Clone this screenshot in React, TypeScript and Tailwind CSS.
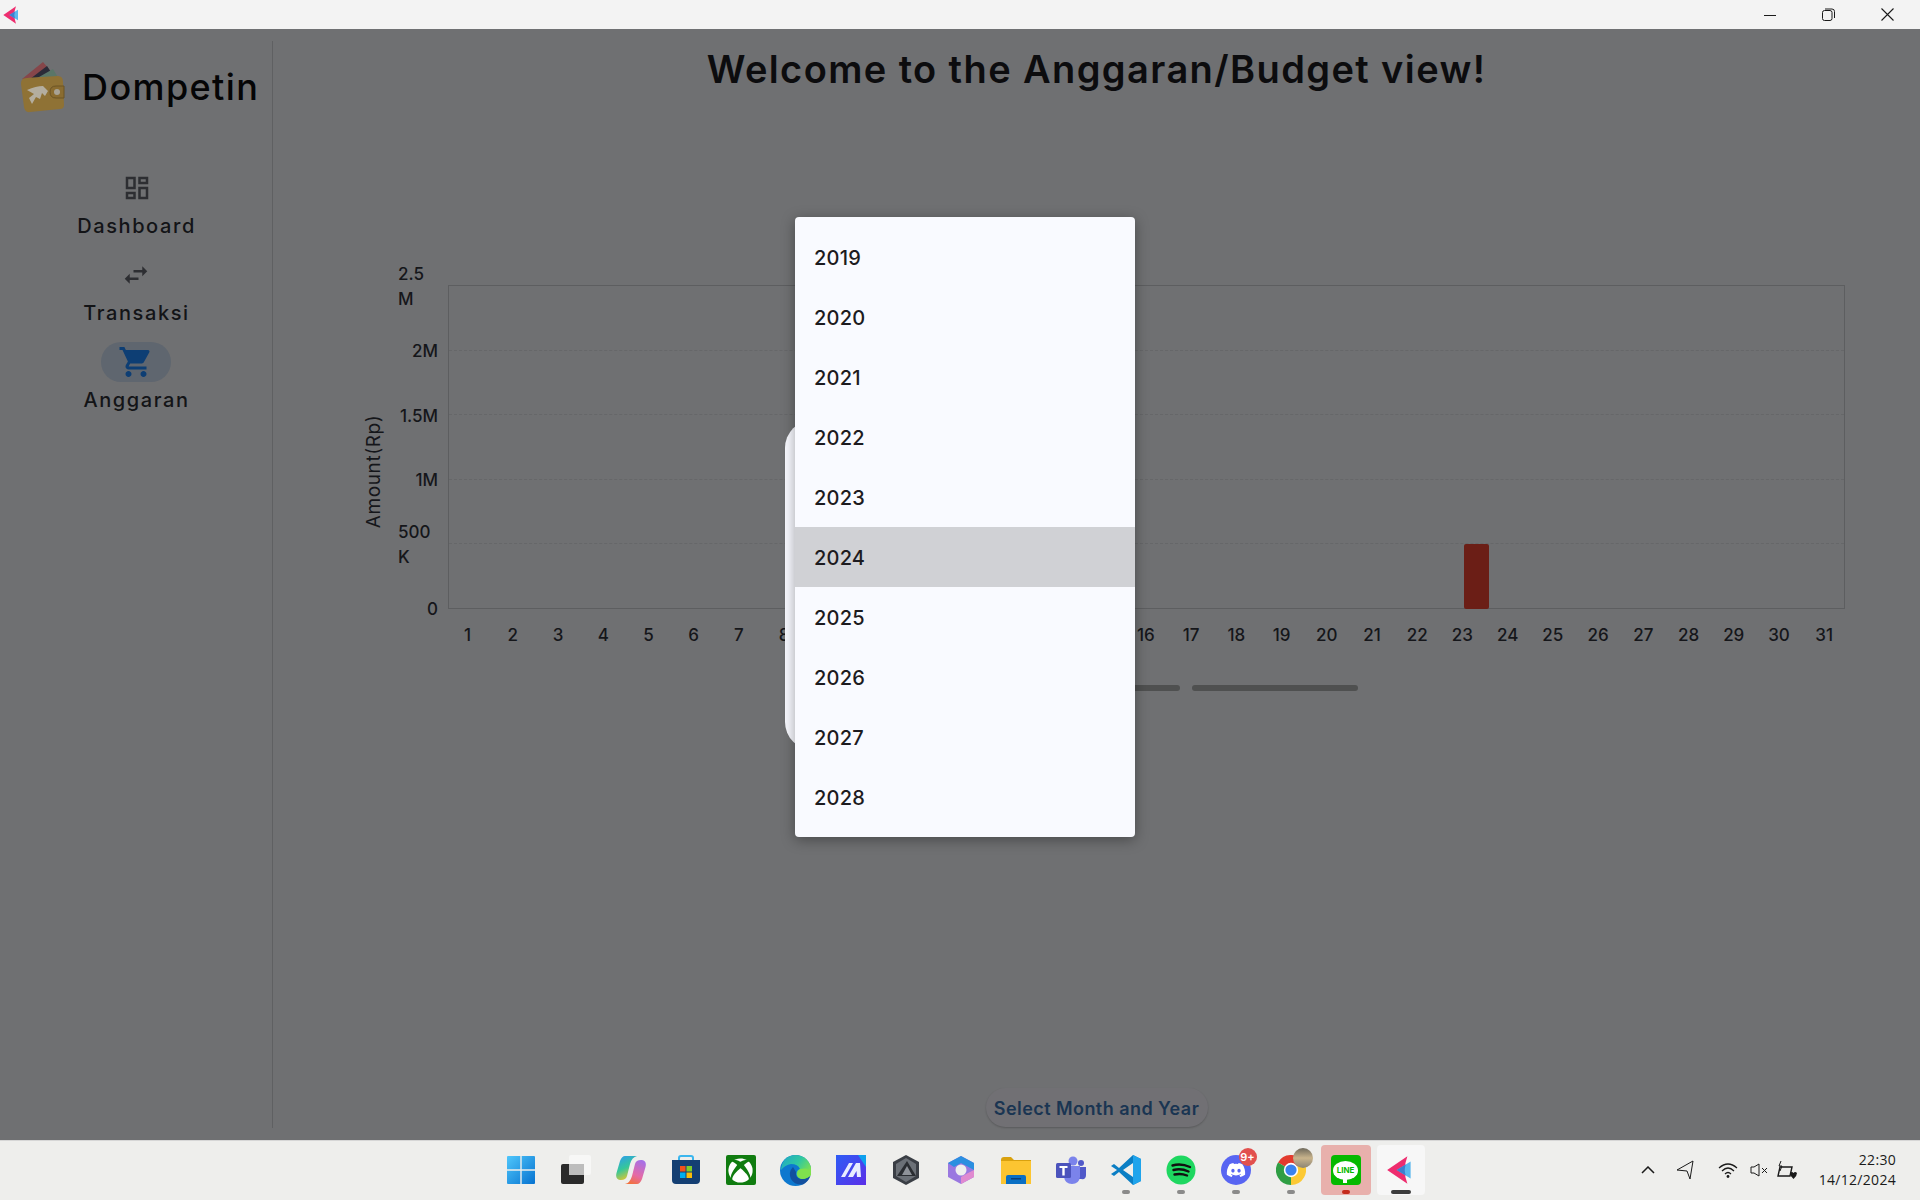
import React from "react";
import { MdOutlineDashboard, MdSwapHoriz, MdShoppingCart } from "react-icons/md";
import { FaDiscord, FaXbox } from "react-icons/fa";

const font = { fontFamily: '"Inter", "Noto Sans", sans-serif' };

const Kite = ({ s = 30 }: { s?: number }) => (
  <svg width={s} height={s} viewBox="0 0 30 30">
    <path d="M2 15 L21 2 Q16 15 21 28 Z" fill="#ee2d6f" />
    <path d="M11 15 L24 7 L24 23 Z" fill="#5bb8ee" />
    <path d="M11 15 L19.5 9.8 Q17.5 15 19.5 20.2 Z" fill="#3d7fd0" />
  </svg>
);

const Wallet = () => (
  <svg width="46" height="52" viewBox="0 0 46 52">
    <path d="M2 17 L23 0 L29 7 L10 20 Z" fill="#86464a" />
    <path d="M10 17 L27 4 L31 10 L16 20 Z" fill="#2b2b38" />
    <path d="M12 19 L33 7 L39 17 Z" fill="#5a7668" />
    <path d="M3 17 Q2 16 21 15 L38 14 Q43 14 43 20 L44 43 Q44 47 40 47 L10 50 Q5 51 4 45 L1 22 Q1 18 3 17 Z" fill="#8f7235" />
    <path d="M30 30 Q30 24 36 24 L44 24 L44 36 L36 36 Q30 36 30 30 Z" fill="#8a6c30" stroke="#6c5424" strokeWidth="1" />
    <circle cx="37" cy="30" r="3" fill="#a8a294" />
    <path d="M7 28 Q16 24 23 24 L28 29 L25 34 L22 31 L20 37 L16 35 L12 42 L9 36 L14 32 Z" fill="#b4ae9f" />
  </svg>
);

const Win = () => (
  <svg width="30" height="30" viewBox="0 0 30 30">
    <defs>
      <linearGradient id="wg" x1="0" y1="0" x2="1" y2="1">
        <stop offset="0" stopColor="#4fc6fb" />
        <stop offset="1" stopColor="#0672d0" />
      </linearGradient>
    </defs>
    <path d="M1 2 Q1 1 2 1 H14.3 V14.3 H1 Z M15.7 1 H28 Q29 1 29 2 V14.3 H15.7 Z M1 15.7 H14.3 V29 H2 Q1 29 1 28 Z M15.7 15.7 H29 V28 Q29 29 28 29 H15.7 Z" fill="url(#wg)" />
  </svg>
);
const TaskView = () => (
  <svg width="30" height="30" viewBox="0 0 30 30">
    <rect x="0" y="9" width="23" height="20" rx="2" fill="#2a2a2a" />
    <rect x="8" y="0" width="22" height="20" rx="2" fill="#f8f8f8" fillOpacity=".85" />
    <rect x="8" y="9" width="15" height="11" fill="#bdbdbd" />
  </svg>
);
const Copilot = () => (
  <svg width="30" height="30" viewBox="0 0 30 30">
    <defs>
      <linearGradient id="c1" x1="0.2" y1="0" x2="0.6" y2="1">
        <stop offset="0" stopColor="#2f9fe8" />
        <stop offset=".5" stopColor="#35c79a" />
        <stop offset="1" stopColor="#f2c524" />
      </linearGradient>
      <linearGradient id="c2" x1="0.7" y1="0" x2="0.3" y2="1">
        <stop offset="0" stopColor="#a670e6" />
        <stop offset=".6" stopColor="#e56aa6" />
        <stop offset="1" stopColor="#f2713c" />
      </linearGradient>
    </defs>
    <path d="M9 1 H21 Q16 2 14 9 L11 21 Q10 25 5 25 H4 Q-1 24 0.5 18 L4 6 Q6 1 9 1 Z" fill="url(#c1)" />
    <path d="M21 29 H9 Q14 28 16 21 L19 9 Q20 5 25 5 H26 Q31 6 29.5 12 L26 24 Q24 29 21 29 Z" fill="url(#c2)" />
    <path d="M17 7 L15 15 L13 23 Q15 18 16.5 12 Z" fill="#f4eef6" />
  </svg>
);
const Store = () => (
  <svg width="30" height="30" viewBox="0 0 30 30">
    <path d="M8 6 V3 Q8 1 10 1 H20 Q22 1 22 3 V6" fill="none" stroke="#3bb6ee" strokeWidth="2" />
    <path d="M1 5 H29 V25 Q29 29 25 29 H5 Q1 29 1 25 Z" fill="#143f73" />
    <rect x="9" y="11" width="5.5" height="5.5" fill="#f1511b" />
    <rect x="15.5" y="11" width="5.5" height="5.5" fill="#80cc28" />
    <rect x="9" y="17.5" width="5.5" height="5.5" fill="#00adef" />
    <rect x="15.5" y="17.5" width="5.5" height="5.5" fill="#fbbc09" />
  </svg>
);
const Xbox = () => (
  <div className="flex h-[30px] w-[30px] items-center justify-center rounded-[2px] bg-[#107c10] text-white">
    <FaXbox size={25} />
  </div>
);
const Edge = () => (
  <svg width="31" height="31" viewBox="0 0 31 31">
    <defs>
      <linearGradient id="e1" x1="0" y1="0" x2="1" y2="0.6">
        <stop offset="0" stopColor="#1fa5c9" />
        <stop offset=".55" stopColor="#2fc7a2" />
        <stop offset="1" stopColor="#7fe04e" />
      </linearGradient>
    </defs>
    <circle cx="15.5" cy="15.5" r="15.5" fill="#0d78cf" />
    <path d="M13 12 Q8 17 11 24 Q14 30 23 29.5 Q28 27 30.5 21 L22 24 Q15 24 16 17 Z" fill="#12509f" />
    <path d="M31 20 Q27 24 22 24 Q17 23 16.5 19 Q16.5 15 20 14 Q18 9 11 9 Q5 10 1 15 Q2 1 15 0 Q27 0 31 12 Z" fill="url(#e1)" />
    <path d="M31 20 Q27 24 22 24 Q18 23.5 17 20 Q17 15 20.5 14 Q28 12 31 17 Z" fill="#7fe04e" />
  </svg>
);
const Ms = () => (
  <svg width="30" height="30" viewBox="0 0 30 30">
    <defs>
      <linearGradient id="m1" x1="0" y1="0" x2="1" y2="1">
        <stop offset="0" stopColor="#2e5cf5" />
        <stop offset="1" stopColor="#5b2fe8" />
      </linearGradient>
    </defs>
    <rect width="30" height="30" fill="url(#m1)" />
    <path d="M22 0 H30 V12 Z" fill="#0ea0ee" />
    <path d="M5 22 L13 8 H17 L9 22 Z M12 22 L20 8 H24 L25 22 H21 L20.5 16 L17 22 Z" fill="#e8ecff" />
  </svg>
);
const Hex = () => (
  <svg width="28" height="30" viewBox="0 0 28 30">
    <path d="M14 0 L27 7 V23 L14 30 L1 23 V7 Z" fill="#3a3e45" />
    <path d="M14 3 L24 9 V21 L14 27 L4 21 V9 Z" fill="#6b7077" />
    <path d="M15 6 L24 21 H5 Z" fill="#2a2d32" />
    <path d="M15 11 L20 20 H10 Z" fill="#8e9299" />
  </svg>
);
const M365 = () => (
  <svg width="30" height="30" viewBox="0 0 30 30">
    <path d="M15 1 L28 8 V22 L15 29 L2 22 V8 Z" fill="#9a78e0" />
    <path d="M15 1 L28 8 V15 L15 8 L8 12 L2 8 Z" fill="#2b8fe0" />
    <path d="M28 15 V22 L15 29 L15 22 L22 18 Z" fill="#e08ad0" />
    <circle cx="15" cy="15" r="5.5" fill="#eeeeee" />
  </svg>
);
const Folder = () => (
  <svg width="30" height="27" viewBox="0 0 30 27">
    <path d="M0 3 Q0 0 3 0 H10 L13 3 H30 V8 H0 Z" fill="#d9a10e" />
    <rect x="0" y="4" width="30" height="23" fill="#fcc531" />
    <path d="M5 27 V20 Q5 18 7 18 H23 Q25 18 25 20 V27 Z" fill="#0a6fc4" />
    <rect x="10" y="21" width="10" height="1.5" fill="#0b3f78" />
  </svg>
);
const Teams = () => (
  <svg width="30" height="28" viewBox="0 0 30 28">
    <circle cx="17" cy="5" r="4.5" fill="#7b83eb" />
    <circle cx="25" cy="7" r="3" fill="#5059c9" />
    <path d="M21 11 H30 V19 Q30 24 25 23 H21 Z" fill="#5059c9" />
    <path d="M8 10 H24 V21 Q23 28 16 28 Q9 28 8 21 Z" fill="#7b83eb" />
    <rect x="0" y="7" width="15" height="15" rx="1.5" fill="#4b53bc" />
    <path d="M3.5 10 H11.5 V12 H8.7 V19.5 H6.3 V12 H3.5 Z" fill="#fff" />
  </svg>
);
const VSCode = () => (
  <svg width="30" height="30" viewBox="0 0 30 30">
    <path d="M22 0 L30 4 V26 L22 30 L8 17 L3 21 L0 19 L6 15 L0 11 L3 9 L8 13 Z M22 8 L12 15 L22 22 Z" fill="#0a7ec4" />
    <path d="M22 0 L30 4 V26 L22 30 Z" fill="#1fa4ec" />
  </svg>
);
const Spotify = () => (
  <svg width="30" height="30" viewBox="0 0 30 30">
    <circle cx="15" cy="15" r="14.5" fill="#1ed760" />
    <path d="M6.5 10.5 Q15 8 24 12 M7.5 15 Q15 13 22.5 16.5 M8.5 19.5 Q15 18 21 20.5" fill="none" stroke="#111" strokeWidth="2.4" strokeLinecap="round" />
  </svg>
);
const Discord = () => (
  <div className="relative flex h-[30px] w-[30px] items-center justify-center rounded-full bg-[#5865f2] text-white">
    <FaDiscord size={20} />
    <span className="absolute -right-[6px] -top-[7px] flex h-[18px] w-[18px] items-center justify-center rounded-full bg-[#e2504e] text-[11px] font-semibold text-white">9+</span>
  </div>
);
const Chrome = () => (
  <div className="relative h-[30px] w-[30px]">
    <svg width="30" height="30" viewBox="0 0 30 30">
      <path d="M15 15 L2 7.5 A15 15 0 0 1 28 7.5 Z" fill="#e33b2e" />
      <path d="M15 15 L28 7.5 A15 15 0 0 1 15 30 Z" fill="#fcc934" />
      <path d="M15 15 L15 30 A15 15 0 0 1 2 7.5 Z" fill="#2f9e44" />
      <circle cx="15" cy="15" r="7.2" fill="#fff" />
      <circle cx="15" cy="15" r="5.6" fill="#3b82ee" />
    </svg>
    <span className="absolute -right-[7px] -top-[7px] h-5 w-5 rounded-full bg-gradient-to-b from-[#6f6a5c] via-[#c9b48c] to-[#8c8474]" />
  </div>
);
const Line = () => (
  <div className="flex h-[30px] w-[30px] items-center justify-center rounded-[4px] bg-[#06b900]">
    <div className="relative flex h-[19px] w-[25px] items-center justify-center rounded-[50%] bg-white">
      <span className="text-[8px] font-bold leading-none text-[#06b900]">LINE</span>
      <span className="absolute -bottom-[3px] left-[10px] h-[5px] w-[4px] bg-white" />
    </div>
  </div>
);

type Slot = { el: React.ReactNode; dot?: string; box?: string };
const slots: Slot[] = [
  { el: <Win /> },
  { el: <TaskView /> },
  { el: <Copilot /> },
  { el: <Store /> },
  { el: <Xbox /> },
  { el: <Edge /> },
  { el: <Ms /> },
  { el: <Hex /> },
  { el: <M365 /> },
  { el: <Folder /> },
  { el: <Teams /> },
  { el: <VSCode />, dot: "w-2 bg-[#8a8a8a]" },
  { el: <Spotify />, dot: "w-2 bg-[#8a8a8a]" },
  { el: <Discord />, dot: "w-2 bg-[#8a8a8a]" },
  { el: <Chrome />, dot: "w-2 bg-[#8a8a8a]" },
  { el: <Line />, dot: "w-2 bg-[#c42b1c]", box: "w-[50px] bg-[#e8b0ac]" },
  { el: <Kite s={32} />, dot: "w-5 bg-[#3c3c3c]", box: "w-[48px] bg-[#f7f7f7]" },
];

const years = ["2019", "2020", "2021", "2022", "2023", "2024", "2025", "2026", "2027", "2028"];
const days = Array.from({ length: 31 }, (_, i) => i + 1);
const ticks: { t: string[]; wrap?: boolean }[] = [
  { t: ["2.5", "M"], wrap: true },
  { t: ["2M"] },
  { t: ["1.5M"] },
  { t: ["1M"] },
  { t: ["500", "K"], wrap: true },
  { t: ["0"] },
];

const NavItem = ({ icon, label, active }: { icon: React.ReactNode; label: string; active?: boolean }) => (
  <div className="flex flex-col items-center gap-[3px]">
    <div className={`flex h-10 w-[70px] items-center justify-center rounded-full ${active ? "bg-[#5f666f]" : ""}`}>{icon}</div>
    <div className="h-[30px] text-[20px] font-medium leading-[30px] tracking-[1.6px] text-[#131417]">{label}</div>
  </div>
);

export default function App() {
  return (
    <div className="relative flex h-screen w-full flex-col overflow-hidden bg-[#6f7072]" style={font}>
      {/* title bar */}
      <div className="flex h-[29px] shrink-0 items-center bg-[#f3f3f3] pl-[2px] pr-[3px]">
        <Kite s={20} />
        <div className="ml-auto flex items-center text-[#1a1a1a]">
          <div className="flex w-[59px] justify-center">
            <svg width="12" height="12" viewBox="0 0 12 12"><path d="M0 6.5 H12" stroke="#1a1a1a" strokeWidth="1" /></svg>
          </div>
          <div className="flex w-[59px] justify-center">
            <svg width="13" height="13" viewBox="0 0 13 13"><rect x="0.5" y="2.5" width="9.5" height="10" rx="2" fill="none" stroke="#1a1a1a" /><path d="M3 1 H10 Q12.5 1 12.5 3.5 V10" fill="none" stroke="#1a1a1a" /></svg>
          </div>
          <div className="flex w-[59px] justify-center pr-[1px]">
            <svg width="13" height="13" viewBox="0 0 13 13"><path d="M0.5 0.5 L12.5 12.5 M12.5 0.5 L0.5 12.5" stroke="#1a1a1a" strokeWidth="1.1" /></svg>
          </div>
        </div>
      </div>

      {/* main */}
      <div className="flex min-h-0 flex-1">
        <aside className="my-3 flex w-[273px] shrink-0 flex-col border-r border-[#5f6062]">
          <div className="mt-[21px] flex h-[52px] items-center pl-[20px]">
            <Wallet />
            <span className="ml-[16px] -translate-y-[1px] text-[36px] font-medium leading-none tracking-[1.4px] text-[#050506]">Dompetin</span>
          </div>
          <nav className="ml-[1px] mt-[54px] flex w-[271px] flex-col items-center gap-[14px]">
            <NavItem icon={<MdOutlineDashboard size={30} color="#2d2e32" />} label="Dashboard" />
            <NavItem icon={<MdSwapHoriz size={30} color="#2d2e32" />} label="Transaksi" />
            <NavItem icon={<MdShoppingCart size={36} color="#0d3e74" />} label="Anggaran" active />
          </nav>
        </aside>

        <main className="flex min-w-0 flex-1 flex-col">
          <h1 className="mt-[16px] h-[48px] text-center text-[38px] font-semibold leading-[48px] tracking-[1.4px] text-[#0c0c0e]">
            Welcome to the Anggaran/Budget view!
          </h1>

          {/* chart */}
          <div className="ml-[88px] mt-[161px] flex">
            <div className="flex h-[387px] w-[37px] items-center justify-center">
              <span className="-translate-x-[6px] translate-y-[24px] -rotate-90 whitespace-nowrap text-[19px] leading-none tracking-[0.6px] text-[#15161a]">Amount(Rp)</span>
            </div>
            <div className="mt-[1px] flex w-[50px] flex-col text-[17px] font-[450] leading-[25px] text-[#15161a]">
              {ticks.map((k) => (
                <div key={k.t[0]} className={`flex h-[64.5px] items-center ${k.wrap ? "justify-start" : "justify-end pr-[10px]"}`}>
                  <div>{k.t.map((l) => <div key={l}>{l}</div>)}</div>
                </div>
              ))}
            </div>
            <div className="mt-[31px]">
              <div className="relative flex h-[324px] w-[1397px] flex-col border border-[#5d5e60]">
                {[0, 1, 2, 3, 4].map((i) => (
                  <div key={i} className={`flex-1 ${i > 0 ? "border-t border-dashed border-[#666769]" : ""}`} />
                ))}
                <div className="absolute -bottom-px left-[1015px] h-[65px] w-[25px] rounded-[2px] bg-[#6b1e16]" />
              </div>
              <div className="-ml-[3px] mt-[14px] flex w-[1402px] text-[17px] font-[450] leading-[24px] text-[#15161a]">
                {days.map((d) => (
                  <div key={d} className="flex-1 text-center">{d}</div>
                ))}
              </div>
            </div>
          </div>

          {/* legend bars */}
          <div className="ml-[741px] mt-[38px] flex gap-[12px]">
            <div className="h-[6px] w-[166px] rounded-full bg-[#4f5050]" />
            <div className="h-[6px] w-[166px] rounded-full bg-[#4f5050]" />
          </div>

          <div className="mb-[13px] mt-auto flex justify-center">
            <button className="flex h-[39px] w-[222px] items-center justify-center rounded-full bg-[#717074] pt-[1px] text-[18px] font-semibold tracking-[0.45px] text-[#1a3552] shadow-[0_1px_2px_rgba(0,0,0,0.2)]">
              Select Month and Year
            </button>
          </div>
        </main>
      </div>

      {/* taskbar */}
      <div className="relative flex h-[60px] shrink-0 items-center border-t border-[#d6d6d6] bg-[#eeeeec] pb-[1px] pl-[493px] text-[#1a1a1a]">
        <div className="flex">
          {slots.map((s, i) => (
            <div key={i} className="relative flex h-[50px] w-[55px] items-center justify-center">
              {s.box && <span className={`absolute left-1/2 top-0 h-[50px] -translate-x-1/2 rounded-[4px] ${s.box}`} />}
              <div className="relative">{s.el}</div>
              {s.dot && <span className={`absolute bottom-[1px] left-1/2 h-1 -translate-x-1/2 rounded-full ${s.dot}`} />}
            </div>
          ))}
        </div>
        <div className="ml-[213px] flex items-center">
          <svg width="14" height="8" viewBox="0 0 14 8"><path d="M1 7 L7 1 L13 7" fill="none" stroke="#1a1a1a" strokeWidth="1.5" /></svg>
          <svg className="ml-[21px]" width="18" height="20" viewBox="0 0 18 20"><path d="M17 1 L1 10 L11 11 L14 19 Z" fill="none" stroke="#1a1a1a" /></svg>
          <svg className="ml-[24px]" width="20" height="16" viewBox="0 0 20 16"><path d="M1 6 Q10 -2 19 6 M4 9 Q10 3 16 9 M7 12 Q10 9 13 12" fill="none" stroke="#1a1a1a" strokeWidth="1.2" /><circle cx="10" cy="14.5" r="1.4" fill="#1a1a1a" /></svg>
          <svg className="ml-[12px]" width="18" height="14" viewBox="0 0 18 14"><path d="M1 4 H4 L9 1 V13 L4 10 H1 Z" fill="none" stroke="#1a1a1a" /><path d="M12 5 L17 10 M17 5 L12 10" stroke="#1a1a1a" /></svg>
          <svg className="ml-[8px]" width="21" height="20" viewBox="0 0 21 20"><path d="M4 7 H16 L14 16 H2 Z" fill="#eeeeec" stroke="#1a1a1a" strokeWidth="1.4" /><path d="M5 1 L3 6 H6 L4 11" stroke="#1a1a1a" fill="none" /><path d="M14 13 Q16 11 17.5 13 Q19 11 21 13 Q21 16 17.5 19 Q14 16 14 13 Z" fill="#1a1a1a" /></svg>
        </div>
        <div className="absolute right-[24px] top-[9px] text-right text-[14px] leading-[20px] tracking-[0.3px] text-[#1a1a1a]" style={{ fontFamily: '"Open Sans", sans-serif' }}>
          <div>22:30</div>
          <div>14/12/2024</div>
        </div>
      </div>

      {/* dialog behind the dropdown */}
      <div className="absolute left-[785px] top-[420px] h-[330px] w-[350px] rounded-[28px] bg-[#f8f9ff]" />

      {/* dropdown */}
      <div className="absolute left-[795px] top-[217px] w-[340px] rounded-[4px] bg-[#f9faff] py-[10px] shadow-[0_3px_14px_rgba(0,0,0,0.35)]">
        {years.map((y) => (
          <div key={y} className={`flex h-[60px] items-center px-[19px] pt-[2px] text-[20px] font-medium tracking-[0.2px] text-[#1d1b20] ${y === "2024" ? "bg-[#d0d1d5]" : ""}`}>
            {y}
          </div>
        ))}
      </div>
    </div>
  );
}
